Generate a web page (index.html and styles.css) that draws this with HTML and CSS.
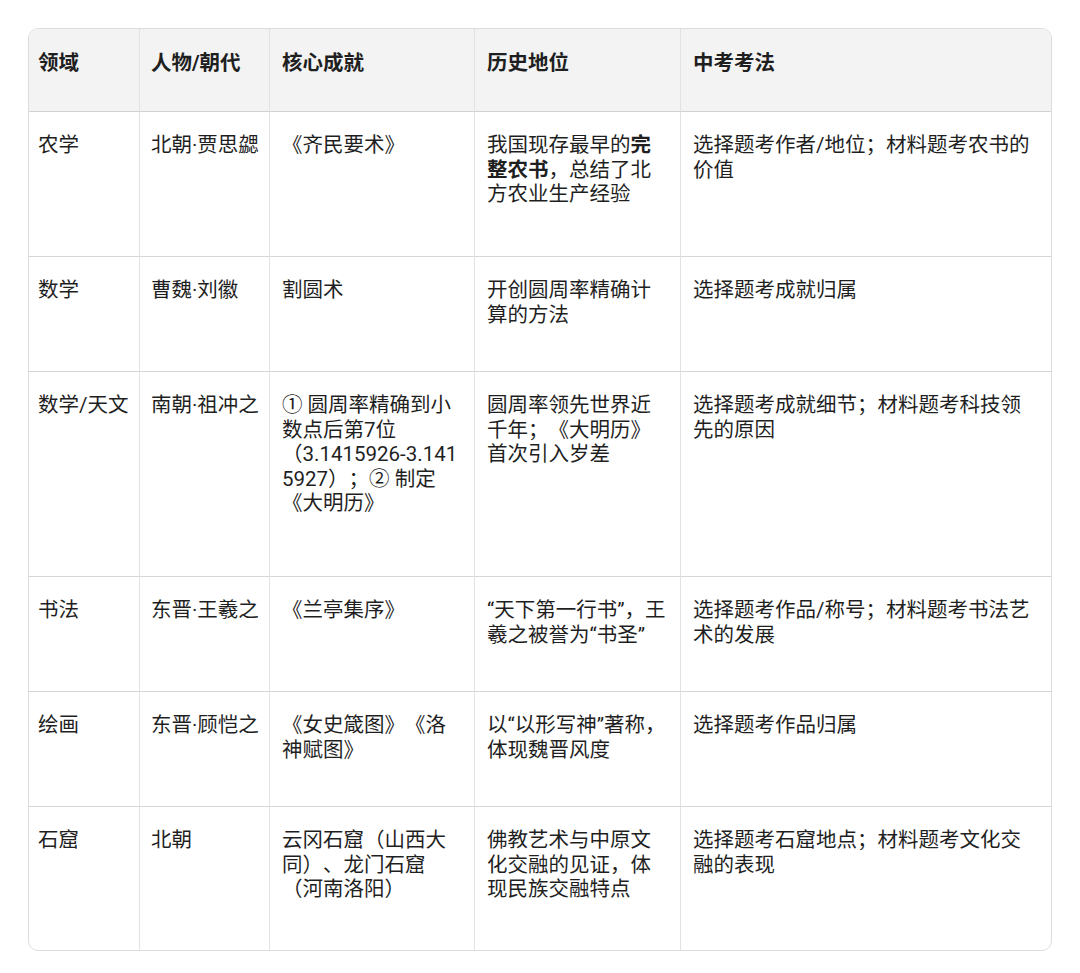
FILE: index.html
```html
<!DOCTYPE html>
<html lang="zh">
<head>
<meta charset="utf-8">
<link rel="stylesheet" href="styles.css">
</head>
<body>
<div class="wrap">
<table class="tbl">
<colgroup>
<col class="c1"><col class="c2"><col class="c3"><col class="c4"><col class="c5">
</colgroup>
<thead>
<tr class="h">
<th>领域</th><th>人物/朝代</th><th>核心成就</th><th>历史地位</th><th>中考考法</th>
</tr>
</thead>
<tbody>
<tr class="r1">
<td>农学</td><td>北朝·贾思勰</td><td>《齐民要术》</td><td>我国现存最早的<b>完整农书</b>，总结了北方农业生产经验</td><td>选择题考作者/地位；材料题考农书的价值</td>
</tr>
<tr class="r2">
<td>数学</td><td>曹魏·刘徽</td><td>割圆术</td><td>开创圆周率精确计算的方法</td><td>选择题考成就归属</td>
</tr>
<tr class="r3">
<td>数学/天文</td><td>南朝·祖冲之</td><td>① 圆周率精确到小数点后第7位（3.1415926-&#8288;3.1415927）；② 制定《大明历》</td><td>圆周率领先世界近千年；《大明历》首次引入岁差</td><td>选择题考成就细节；材料题考科技领先的原因</td>
</tr>
<tr class="r4">
<td>书法</td><td>东晋·王羲之</td><td>《兰亭集序》</td><td>“天下第一行书”，王羲之被誉为“书圣”</td><td>选择题考作品/称号；材料题考书法艺术的发展</td>
</tr>
<tr class="r5">
<td>绘画</td><td>东晋·顾恺之</td><td>《女史箴图》《洛神赋图》</td><td>以“以形写神”著称，体现魏晋风度</td><td>选择题考作品归属</td>
</tr>
<tr class="r6">
<td>石窟</td><td>北朝</td><td>云冈石窟（山西大同）、龙门石窟（河南洛阳）</td><td>佛教艺术与中原文化交融的见证，体现民族交融特点</td><td>选择题考石窟地点；材料题考文化交融的表现</td>
</tr>
</tbody>
</table>
</div>
</body>
</html>
```
FILE: styles.css
```css
html, body {
  margin: 0;
  padding: 0;
  background: #ffffff;
}
body {
  padding: 28px 0 0 28px;
  font-family: Roboto, "Noto Sans CJK SC", sans-serif;
  color: #1f1f1f;
}
.wrap {
  width: 1022px;
  border: 1px solid #dcdcdc;
  border-radius: 10px;
  overflow: hidden;
}
.tbl {
  width: 1022px;
  table-layout: fixed;
  border-collapse: separate;
  border-spacing: 0;
  font-size: 20.5px;
  line-height: 24.5px;
  text-spacing-trim: space-all;
}
.c1 { width: 111px; }
.c2 { width: 130px; }
.c3 { width: 205px; }
.c4 { width: 206px; }
.c5 { width: 370px; }
.tbl th, .tbl td {
  box-sizing: border-box;
  vertical-align: top;
  text-align: left;
  padding: 21px 12px 0 12px;
  border-right: 1px solid #e2e2e2;
  border-bottom: 1px solid #d6d6d6;
  overflow-wrap: break-word;
  text-spacing-trim: space-all;
}
.tbl th:nth-child(1), .tbl td:nth-child(1) {
  padding-left: 9px;
  padding-right: 4px;
}
.tbl th:nth-child(2), .tbl td:nth-child(2) {
  padding-left: 11px;
  padding-right: 4px;
}
.tbl th:last-child, .tbl td:last-child {
  border-right: none;
}
.tbl tbody tr:last-child td {
  border-bottom: none;
}
.tbl th {
  background: #f3f3f3;
  font-weight: 700;
  padding-top: 22px;
  border-bottom: 1px solid #d2d2d2;
}
.tbl b {
  font-weight: 700;
}
.h { height: 83px; }
.r1 { height: 145px; }
.r2 { height: 115px; }
.r3 { height: 205px; }
.r4 { height: 115px; }
.r5 { height: 115px; }
.r6 { height: 143px; }
```
